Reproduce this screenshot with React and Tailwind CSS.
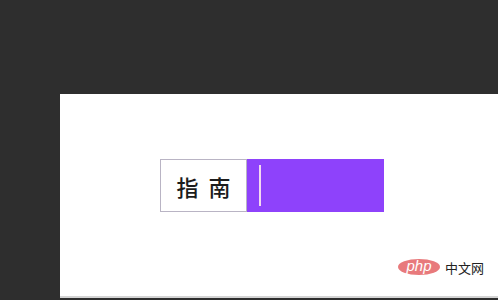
import React from 'react';

const App = () => {
  return (
    <div className="w-[498px] h-[300px] bg-[#2e2e2e] pt-[94px] pl-[60px] overflow-hidden">
      <div className="relative h-[204px] bg-white border-b-2 border-[#d4d4d4] pl-[100px] pt-[65px]">
        <div className="flex w-fit">
          <div className="w-[87px] h-[53px] border border-[#b9b4c4] flex items-center justify-center">
            <span
              className="text-[22px] font-medium text-[#1c1c1c] tracking-[10px] -mr-[10px] leading-none"
              style={{ fontFamily: '"Noto Sans CJK SC", sans-serif' }}
            >
              指南
            </span>
          </div>
          <div className="w-[137px] h-[53px] bg-[#8e42fb] pl-[12px] pt-[6px]">
            <div className="w-[2px] h-[41px] bg-[#f3d9f0]" />
          </div>
        </div>

        <div className="absolute left-[338px] top-[165px] flex items-center gap-[5px]">
          <div className="w-[42px] h-[16px] rounded-[50%] bg-[#e87a7c] flex items-center justify-center">
            <span
              className="text-white italic text-[15px] leading-none -mt-[3px]"
              style={{ fontFamily: '"Liberation Sans", sans-serif' }}
            >
              php
            </span>
          </div>
          <span
            className="text-[13px] text-[#222] leading-none"
            style={{ fontFamily: '"Noto Sans CJK SC", sans-serif' }}
          >
            中文网
          </span>
        </div>
      </div>
    </div>
  );
};

export default App;
